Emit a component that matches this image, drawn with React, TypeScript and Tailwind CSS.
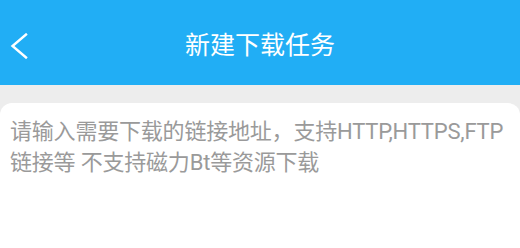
import React from 'react'

const App = () => {
  return (
    <div className="w-[520px] h-[248px] bg-[#ededed] flex flex-col overflow-hidden" style={{ fontFamily: 'Roboto, "Noto Sans CJK SC", sans-serif' }}>
      {/* Header */}
      <div className="h-[85px] bg-[#21aef5] flex items-center relative shrink-0">
        <button className="absolute left-[10px] top-[33px] w-[18px] h-[26px] flex items-center">
          <svg width="18" height="26" viewBox="0 0 18 26" fill="none">
            <path d="M16 1.5 L2.5 13 L16 24.5" stroke="white" strokeWidth="2.4" strokeLinecap="square" />
          </svg>
        </button>
        <h1 className="w-full text-center text-white text-[25px] leading-none pt-[5px]">
          新建下载任务
        </h1>
      </div>

      {/* Input card */}
      <div className="mt-[18px] flex-1 bg-white rounded-t-[12px] px-[10px] pt-[13px]">
        <p className="text-[22px] leading-[31px] text-[#9a9a9a] whitespace-nowrap tracking-[-0.2px]">
          请输入需要下载的链接地址，支持HTTP,HTTPS,FTP
          <br />
          链接等 不支持磁力Bt等资源下载
        </p>
      </div>
    </div>
  )
}

export default App
